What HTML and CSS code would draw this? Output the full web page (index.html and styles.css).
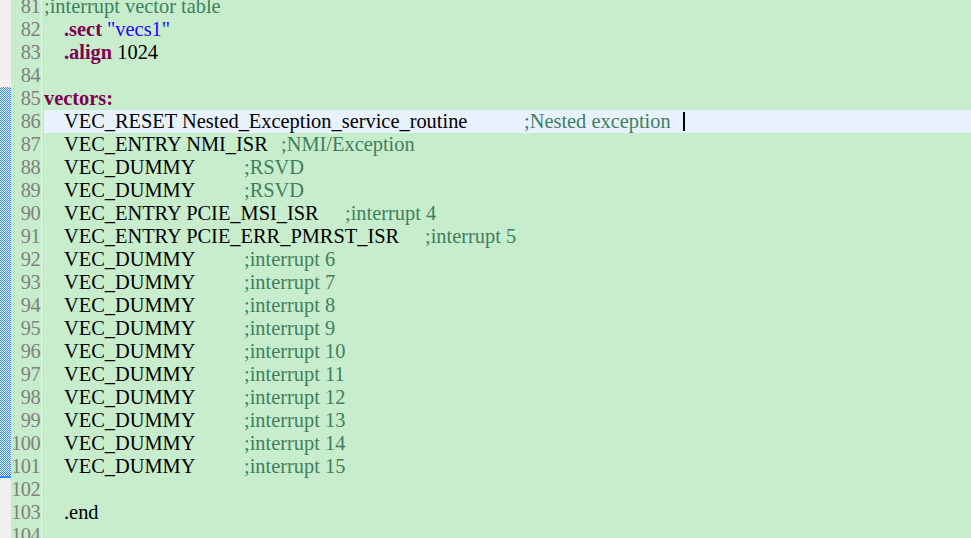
FILE: index.html
```html
<!DOCTYPE html>
<html>
<head>
<meta charset="utf-8">
<link rel="stylesheet" href="styles.css">
</head>
<body>
<div class="editor">
  <div class="strip">
    <div class="strip-top"></div>
    <div class="changebar"></div>
  </div>
  <div class="nums">
    <div>81</div><div>82</div><div>83</div><div>84</div><div>85</div><div>86</div><div>87</div><div>88</div>
    <div>89</div><div>90</div><div>91</div><div>92</div><div>93</div><div>94</div><div>95</div><div>96</div>
    <div>97</div><div>98</div><div>99</div><div>100</div><div>101</div><div>102</div><div>103</div><div>104</div>
  </div>
  <div class="lines">
    <div class="line"><span class="cm">;interrupt vector table</span></div>
    <div class="line ind"><span class="kw">.sect</span> <span class="str">"vecs1"</span></div>
    <div class="line ind"><span class="kw">.align</span> 1024</div>
    <div class="line"></div>
    <div class="line"><span class="kw">vectors:</span></div>
    <div class="line ind cur"><span class="ins w460">VEC_RESET Nested_Exception_service_routine</span><span class="cm">;Nested exception</span><span class="caret"></span></div>
    <div class="line ind"><span class="ins w217">VEC_ENTRY NMI_ISR</span><span class="cm">;NMI/Exception</span></div>
    <div class="line ind"><span class="ins w180">VEC_DUMMY</span><span class="cm">;RSVD</span></div>
    <div class="line ind"><span class="ins w180">VEC_DUMMY</span><span class="cm">;RSVD</span></div>
    <div class="line ind"><span class="ins w281">VEC_ENTRY PCIE_MSI_ISR</span><span class="cm">;interrupt 4</span></div>
    <div class="line ind"><span class="ins w361">VEC_ENTRY PCIE_ERR_PMRST_ISR</span><span class="cm">;interrupt 5</span></div>
    <div class="line ind"><span class="ins w180">VEC_DUMMY</span><span class="cm">;interrupt 6</span></div>
    <div class="line ind"><span class="ins w180">VEC_DUMMY</span><span class="cm">;interrupt 7</span></div>
    <div class="line ind"><span class="ins w180">VEC_DUMMY</span><span class="cm">;interrupt 8</span></div>
    <div class="line ind"><span class="ins w180">VEC_DUMMY</span><span class="cm">;interrupt 9</span></div>
    <div class="line ind"><span class="ins w180">VEC_DUMMY</span><span class="cm">;interrupt 10</span></div>
    <div class="line ind"><span class="ins w180">VEC_DUMMY</span><span class="cm">;interrupt 11</span></div>
    <div class="line ind"><span class="ins w180">VEC_DUMMY</span><span class="cm">;interrupt 12</span></div>
    <div class="line ind"><span class="ins w180">VEC_DUMMY</span><span class="cm">;interrupt 13</span></div>
    <div class="line ind"><span class="ins w180">VEC_DUMMY</span><span class="cm">;interrupt 14</span></div>
    <div class="line ind"><span class="ins w180">VEC_DUMMY</span><span class="cm">;interrupt 15</span></div>
    <div class="line"></div>
    <div class="line ind">.end</div>
    <div class="line"></div>
  </div>
</div>
</body>
</html>
```
FILE: styles.css
```css
html, body {
  margin: 0;
  padding: 0;
  background: #c7edcc;
  overflow: hidden;
  height: 538px;
}
.editor {
  display: flex;
  margin-top: -5px;
  height: 560px;
  font-family: "Liberation Serif", "Times New Roman", serif;
  font-size: 20.4px;
  line-height: 23px;
  color: #000;
}
.strip {
  width: 11px;
  flex: none;
  display: flex;
  flex-direction: column;
  background: #f0f0f0;
}
.strip-top {
  height: 92px;
  flex: none;
}
.changebar {
  position: relative;
  flex: none;
  height: 389px;
  border-bottom: 2px solid #2e8cff;
  background: repeating-linear-gradient(90deg, #ffffff 0 1px, #2e8cff 1px 2px);
}
.changebar::after {
  content: "";
  position: absolute;
  inset: 0;
  background: repeating-linear-gradient(90deg, #2e8cff 0 1px, #ffffff 1px 2px);
  -webkit-mask-image: repeating-linear-gradient(180deg, transparent 0 1px, #000 1px 2px);
  mask-image: repeating-linear-gradient(180deg, transparent 0 1px, #000 1px 2px);
}
.nums {
  width: 29px;
  flex: none;
  padding-right: 1px;
  text-align: right;
  color: #808080;
  border-right: 1px solid #e2f5e5;
  letter-spacing: -0.6px;
}
.nums div {
  height: 23px;
}
.lines {
  flex: 1;
  margin-left: 2px;
}
.line {
  height: 23px;
  white-space: pre;
  position: relative;
}
.line.ind {
  padding-left: 20px;
}
.line.cur {
  background: #e8f2fe;
}
.ins {
  display: inline-block;
}
.w180 { width: 180px; }
.w217 { width: 217px; }
.w281 { width: 281px; }
.w361 { width: 361px; }
.w460 { width: 460px; }
.cm {
  color: #3f7f5f;
}
.kw {
  color: #7f0055;
  font-weight: bold;
}
.str {
  color: #2a00ff;
}
.caret {
  position: absolute;
  left: 639px;
  top: 2px;
  width: 2px;
  height: 19px;
  background: #000;
}
```
